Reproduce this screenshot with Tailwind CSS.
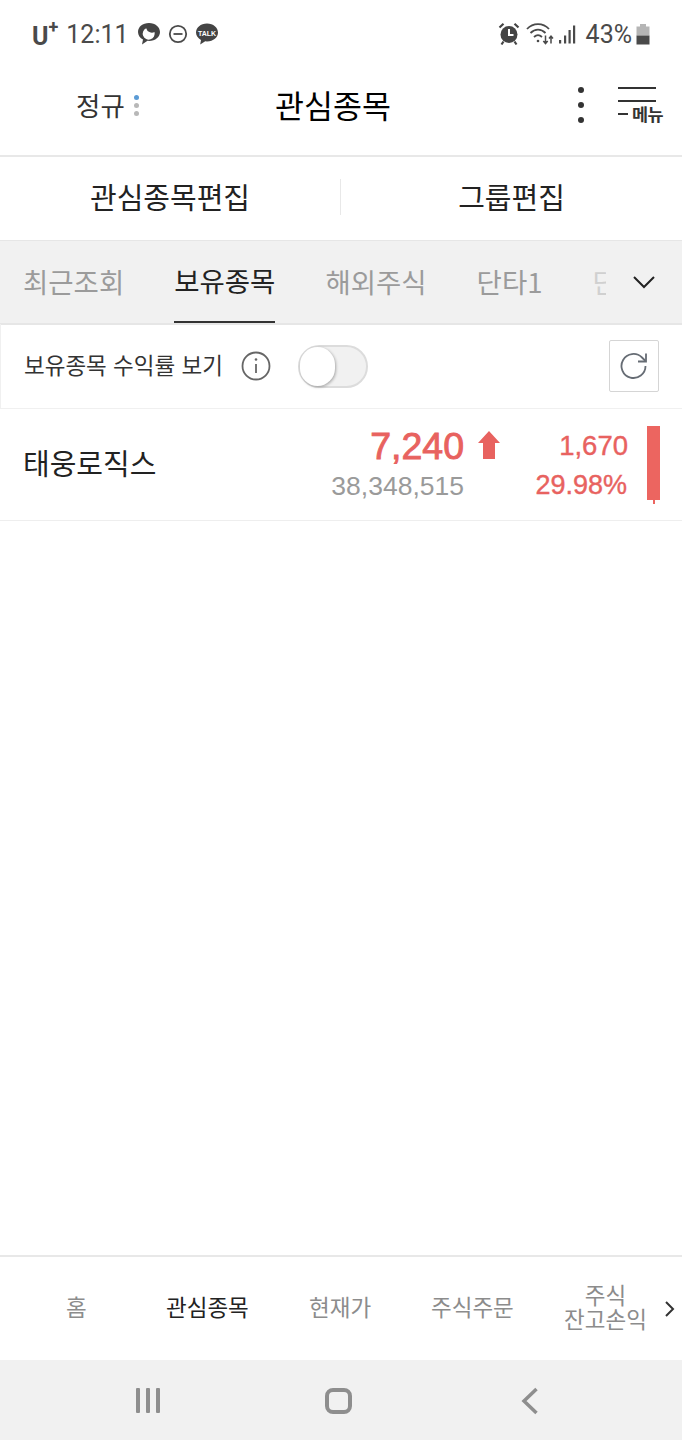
<!DOCTYPE html>
<html lang="ko">
<head>
    <meta charset="UTF-8">
    <meta name="viewport" content="width=device-width, initial-scale=1.0">
    <title>관심종목</title>
    <script src="https://cdn.jsdelivr.net/npm/@tailwindcss/browser@4"></script>
</head>
<body class="bg-white w-[682px] h-[1440px] overflow-hidden flex flex-col font-['Noto_Sans_CJK_KR',sans-serif]">

    <!-- Status bar -->
    <div class="h-[68px] shrink-0 flex items-center justify-between pl-[32px] pr-[32px] text-[#4a4a4a]">
        <div class="flex items-center">
            <span class="font-['Roboto',sans-serif] font-bold text-[25px] leading-none relative top-[2px]">U</span>
            <span class="font-['Roboto',sans-serif] font-bold text-[18px] leading-none relative top-[-7px]">+</span>
            <span class="font-['Roboto',sans-serif] text-[25px] leading-none ml-[8px]">12:11</span>
            <svg class="ml-[8px]" width="24" height="24" viewBox="0 0 24 24"><path d="M12 1C5.600 1 1 4.800 1 10c0 3.300 2 6 5 7.600L5 22.500l5.500-3.700c.5.100 1 .1 1.500.1 6.400 0 11-3.900 11-8.900S18.400 1 12 1z" fill="#444"/><path d="M11 5.500a6 6 0 0 0 6.500 6.500a6 6 0 1 1-6.500-6.500z" fill="#fff" transform="rotate(-20 12 11)"/></svg>
            <svg class="ml-[7px]" width="20" height="20" viewBox="0 0 20 20" fill="none" stroke="#4a4a4a" stroke-width="1.800"><circle cx="10" cy="10" r="8.200"/><path d="M5.500 10h9"/></svg>
            <svg class="ml-[7px]" width="24" height="24" viewBox="0 0 24 24"><path d="M12 1.500C5.600 1.500 1 5.500 1 10.500c0 3.200 2 5.900 5 7.500l-.8 4.500 5-3.200 1.800.1c6.400 0 11-4 11-8.900S18.400 1.500 12 1.500z" fill="#444"/><text x="12" y="13.500" text-anchor="middle" font-size="7" font-weight="700" fill="#fff" font-family="Liberation Sans">TALK</text></svg>
        </div>
        <div class="flex items-center">
            <svg width="22" height="24" viewBox="0 0 22 24" fill="#444"><circle cx="11" cy="12.500" r="8.500"/><path d="M1.500 5.500 5.500 1.800 M20.500 5.500 16.500 1.800 M5.500 19.500 3.500 22.500 M16.500 19.500 18.500 22.500" stroke="#444" stroke-width="2.200" fill="none"/><path d="M11 7v6h4.500" stroke="#fff" stroke-width="2" fill="none"/></svg>
            <svg class="ml-[6px]" width="28" height="24" viewBox="0 0 28 24" fill="none" stroke="#4a4a4a" stroke-width="1.800"><path d="M1 7C7 .5 17 .5 23 7"/><path d="M4.500 11C9 6.500 15 6.500 19.500 11"/><path d="M8 15c2.500-2.300 5.500-2.300 8 0"/><circle cx="12" cy="19" r="1.300" fill="#4a4a4a" stroke="none"/><path d="M19.500 13.500v8M17.300 19l2.200 2.500 2.200-2.500M25 21.500v-7M23 16.500l2-2.300 2 2.300" stroke-width="1.500"/></svg>
            <svg class="ml-[4px]" width="18" height="24" viewBox="0 0 18 24" fill="#4a4a4a"><rect x="1" y="18" width="2.200" height="3.500"/><rect x="6" y="13.500" width="2.200" height="8"/><rect x="10.500" y="8" width="2.200" height="13.500"/><rect x="15" y="3.500" width="2.200" height="18"/></svg>
            <span class="font-['Roboto',sans-serif] text-[25px] leading-none ml-[10px]">43%</span>
            <svg class="ml-[4px]" width="14" height="21" viewBox="0 0 14 21"><rect x="4" y="0" width="6" height="3" fill="#b5b5b5"/><rect x="0.500" y="2.500" width="13" height="9" fill="#b5b5b5"/><rect x="0.500" y="11.500" width="13" height="9" fill="#4a4a4a"/></svg>
        </div>
    </div>

    <!-- Header -->
    <div class="h-[87px] shrink-0 relative flex items-center justify-between pb-[13px]">
        <div class="flex items-center ml-[76px]">
            <span class="text-[26.500px] leading-none text-[#333]">정규</span>
            <span class="flex flex-col gap-[3px] ml-[9px]">
                <span class="w-[5px] h-[5px] rounded-full bg-[#5b9bd5]"></span>
                <span class="w-[5px] h-[5px] rounded-full bg-[#b8b8b8]"></span>
                <span class="w-[5px] h-[5px] rounded-full bg-[#b8b8b8]"></span>
            </span>
        </div>
        <span class="absolute left-[275px] text-[31.500px] leading-none text-black">관심종목</span>
        <div class="flex items-center mr-[18px]">
            <span class="flex flex-col gap-[9px] mr-[34px]">
                <span class="w-[6px] h-[6px] rounded-full bg-[#333]"></span>
                <span class="w-[6px] h-[6px] rounded-full bg-[#333]"></span>
                <span class="w-[6px] h-[6px] rounded-full bg-[#333]"></span>
            </span>
            <div class="w-[46px] flex flex-col">
                <span class="w-[38px] h-[2px] bg-[#333]"></span>
                <span class="w-[38px] h-[2px] bg-[#333] mt-[11px]"></span>
                <div class="flex items-center mt-[3px] h-[18px]">
                    <span class="w-[10px] h-[2px] bg-[#333]"></span>
                    <span class="text-[17.500px] font-bold leading-none text-[#333] ml-[4px] tracking-[-0.5px] shrink-0">메뉴</span>
                </div>
            </div>
        </div>
    </div>

    <!-- Edit buttons -->
    <div class="h-[85px] shrink-0 flex items-center border-t-2 border-[#e8e8e8] pb-[4px]">
        <div class="w-[340px] text-center text-[29px] leading-none text-[#222]">관심종목편집</div>
        <div class="w-px h-[36px] bg-[#e8e8e8]"></div>
        <div class="flex-1 text-center text-[29px] leading-none text-[#222]">그룹편집</div>
    </div>

    <!-- Tabs -->
    <div class="h-[85px] shrink-0 bg-[#f1f1f1] border-t border-b-2 border-[#e6e6e6] flex relative overflow-hidden">
        <div class="w-[606px] overflow-hidden flex pl-[23px] gap-[50px] text-[27.500px] leading-none text-[#9b9b9b]">
            <span class="shrink-0 h-full flex items-center">최근조회</span>
            <span class="shrink-0 h-full flex items-center text-[#222] border-b-2 border-[#333]">보유종목</span>
            <span class="shrink-0 h-full flex items-center">해외주식</span>
            <span class="shrink-0 h-full flex items-center">단타1</span>
            <span class="shrink-0 h-full flex items-center text-[#d0d0d0]">단타2</span>
        </div>
        <svg class="absolute left-[633px] top-[35px]" width="22" height="13" viewBox="0 0 22 13" fill="none" stroke="#222" stroke-width="2"><path d="M1 1l10 10L21 1"/></svg>
    </div>

    <!-- Toggle row -->
    <div class="h-[85px] shrink-0 flex items-center pl-[23px] pr-[23px] border-l border-b border-[#f0f0f0] -mt-px relative">
        <span class="text-[22.500px] leading-none text-[#333] relative top-[-2px]">보유종목 수익률 보기</span>
        <svg class="ml-[18px]" width="30" height="30" viewBox="0 0 30 30" fill="none" stroke="#666" stroke-width="1.800"><circle cx="15" cy="15" r="13.500"/><path d="M15 13v9" /><circle cx="15" cy="8.500" r="1.300" fill="#666" stroke="none"/></svg>
        <div class="ml-[27px] w-[70px] h-[43px] rounded-full bg-[#f1f1f1] border-2 border-[#dcdcdc] relative">
            <div class="absolute left-0 top-0 w-[35px] h-[39px] rounded-full bg-white shadow-[1px_1px_3px_rgba(0,0,0,0.3)]"></div>
        </div>
        <div class="ml-auto w-[50px] h-[52px] border border-[#d5d5d5] rounded-[2px] flex items-center justify-center">
            <svg width="28" height="28" viewBox="0 0 28 28" fill="none" stroke="#666c74" stroke-width="1.800"><path d="M25.500 14a12 12 0 1 1-3.500-8.500l3.500 3.500"/><path d="M26 1.500V9.500h-8"/></svg>
        </div>
    </div>

    <!-- Stock row -->
    <div class="h-[112px] shrink-0 flex items-center border-b border-[#eeeeee] pl-[23px] font-['Liberation_Sans',sans-serif]">
        <span class="text-[29px] leading-none text-[#222] font-['Noto_Sans_CJK_KR',sans-serif] relative top-[-2px]">태웅로직스</span>
        <div class="ml-auto flex flex-col items-end w-[180px] relative top-[-2px]">
            <span class="text-[37.500px] leading-[42px] text-[#e8625f] [-webkit-text-stroke:0.9px_#e8625f]">7,240</span>
            <span class="text-[26.500px] leading-[34px] text-[#9a9a9a] relative top-[2px]">38,348,515</span>
        </div>
        <svg class="ml-[14px] self-start mt-[22px]" width="22" height="28" viewBox="0 0 22 28" fill="#e8625f"><path d="M11 0 22 12H17V28H5V12H0z"/></svg>
        <div class="ml-[36px] flex flex-col items-end text-[#e8625f] w-[92px] relative top-[-1px] [-webkit-text-stroke:0.4px_#e8625f]">
            <span class="text-[27.500px] leading-[42px] relative top-[-1px]">1,670</span>
            <span class="text-[27px] leading-[34px] relative left-[-1px]">29.98%</span>
        </div>
        <div class="ml-[19px] mr-[22px] w-[13px] flex flex-col items-center">
            <div class="w-[13px] h-[74px] bg-[#ec6560]"></div>
            <div class="w-[2px] h-[4px] bg-[#ec6560]"></div>
        </div>
    </div>

    <div class="flex-1"></div>

    <!-- Bottom nav -->
    <div class="h-[105px] shrink-0 border-t-2 border-[#e8e8e8] flex items-center relative text-[22.500px] leading-[24px] text-[#8c8c8c] pb-[6px]">
        <span class="absolute left-[66px]">홈</span>
        <span class="absolute left-[166px] text-[#222]">관심종목</span>
        <span class="absolute left-[309px]">현재가</span>
        <span class="absolute left-[431px]">주식주문</span>
        <span class="absolute left-[563px] w-[85px] text-center">주식<br>잔고손익</span>
        <svg class="absolute left-[665px] top-[44px]" width="10" height="16" viewBox="0 0 10 16" fill="none" stroke="#333" stroke-width="2"><path d="M1 1l7 7-7 7"/></svg>
    </div>

    <!-- System nav -->
    <div class="h-[80px] shrink-0 bg-[#f1f1f1] flex items-center relative">
        <div class="absolute left-[136px] top-[28px] flex gap-[6px]">
            <span class="w-[4px] h-[25px] bg-[#8e8e8e] rounded-[1px]"></span>
            <span class="w-[4px] h-[25px] bg-[#8e8e8e] rounded-[1px]"></span>
            <span class="w-[4px] h-[25px] bg-[#8e8e8e] rounded-[1px]"></span>
        </div>
        <div class="absolute left-[325px] top-[28px] w-[27px] h-[26px] border-[4px] border-[#8e8e8e] rounded-[8px]"></div>
        <svg class="absolute left-[521px] top-[27px]" width="18" height="28" viewBox="0 0 18 28" fill="none" stroke="#8e8e8e" stroke-width="3.500"><path d="M15.500 2 3 14l12.500 12"/></svg>
    </div>
</body>
</html>
